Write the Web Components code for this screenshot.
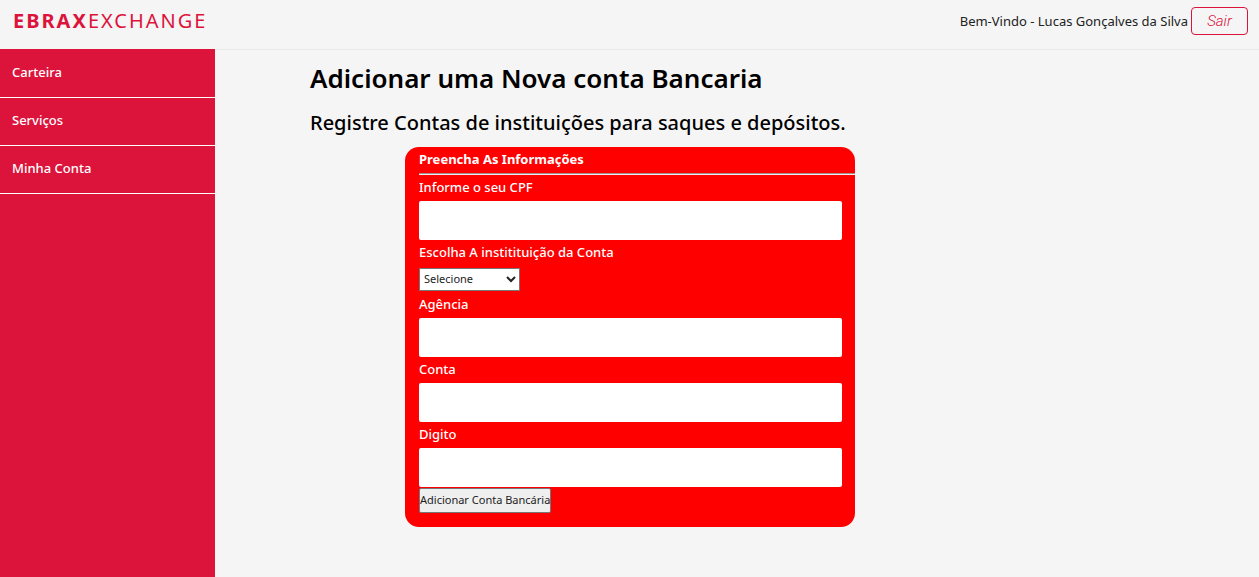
<!DOCTYPE html>
<html lang="pt-BR">
<head>
<meta charset="utf-8">
<title>Ebrax Exchange</title>
<style>
body { margin: 0; background: #f5f5f5; font-family: "Noto Sans", "Open Sans", sans-serif; }
</style>
</head>
<body>
<exchange-app></exchange-app>
<script>
function define(name, html, setup) {
  const template = document.createElement('template');
  template.innerHTML = html;
  customElements.define(name, class extends HTMLElement {
    constructor() {
      super();
      this.attachShadow({ mode: 'open' }).append(template.content.cloneNode(true));
    }
    connectedCallback() { if (setup) setup(this, this.shadowRoot); }
  });
}

define('top-bar', `
<style>
:host { display: flex; justify-content: space-between; align-items: flex-start; box-sizing: border-box; height: 50px; padding: 7px 11px 0 13px; border-bottom: 1px solid #e9e9e9; }
.logo { font-size: 20px; line-height: 28px; letter-spacing: 2px; color: #dc143c; font-weight: 400; text-decoration: none; }
b { font-weight: 700; }
.user { display: flex; align-items: center; gap: 3px; font-size: 13px; font-weight: 400; color: #222; }
button { box-sizing: border-box; width: 57px; height: 28px; padding: 0; border: 1px solid #dc143c; border-radius: 4px; background: transparent; color: #dc143c; font: italic 300 15px Roboto, sans-serif; }
</style>
<a class="logo" href="#"><b>EBRAX</b>EXCHANGE</a>
<div class="user"><span>Bem-Vindo - Lucas Gonçalves da Silva</span><button type="button">Sair</button></div>`);

define('nav-item', `
<style>
:host { display: block; border-bottom: 1px solid #fff; }
a { display: block; padding: 0 12px 2px; color: #fff; font-size: 13px; font-weight: 500; line-height: 45px; text-decoration: none; }
</style>
<a href="#"><slot></slot></a>`);

define('side-menu', `
<style>
:host { display: block; margin-top: -1px; padding-top: 1px; background: #dc143c; }
</style>
<nav><slot></slot></nav>`);

define('text-field', `
<style>
:host { display: block; }
label { display: block; padding-bottom: 2px; font-size: 13px; font-weight: 500; line-height: 24px; }
input { display: block; box-sizing: border-box; width: 100%; height: 39px; padding: 0 8px; border: 0; border-radius: 2px; background: #fff; font: inherit; }
</style>
<label for="field"></label><input id="field" type="text">`,
(host, root) => { root.querySelector('label').textContent = host.getAttribute('label'); });

define('select-field', `
<style>
:host { display: block; }
label { display: block; padding-bottom: 2px; font-size: 13px; font-weight: 500; line-height: 24px; }
select { display: block; box-sizing: border-box; width: 101px; height: 23px; margin: 2px 0 1px; padding: 0 0 2px; border: 1px solid #767676; border-radius: 0; background: #fff; color: #222; font-family: inherit; font-size: 11px; font-weight: 400; }
</style>
<label for="field"></label><select id="field"><option>Selecione</option></select>`,
(host, root) => { root.querySelector('label').textContent = host.getAttribute('label'); });

define('bank-form', `
<style>
:host { display: block; box-sizing: border-box; max-width: 450px; margin: 0 auto; padding: 0 13px 14px 14px; border-radius: 14px; background: #f00; color: #fff; }
h3 { margin: 0 -13px 0 0; padding-bottom: 2px; font-size: 13px; font-weight: 700; line-height: 24px; }
hr { height: 1px; margin: 0 -13px 0 0; border: 0; border-top: 1px solid #a09090; background: #eee; }
button { display: block; box-sizing: border-box; width: 132px; height: 25px; margin-top: 1px; padding: 0 0 2px; border: 1px solid #767676; border-radius: 2px; background: #efefef; color: #222; font-family: inherit; font-size: 11px; font-weight: 400; white-space: nowrap; }
</style>
<form>
<h3>Preencha As Informações</h3>
<hr>
<text-field label="Informe o seu CPF"></text-field>
<select-field label="Escolha A institituição da Conta"></select-field>
<text-field label="Agência"></text-field>
<text-field label="Conta"></text-field>
<text-field label="Digito"></text-field>
<button type="button">Adicionar Conta Bancária</button>
</form>`);

define('exchange-app', `
<style>
:host { display: flex; flex-direction: column; min-height: 100vh; }
.body { display: grid; grid-template-columns: 215px 1fr; flex: 1; }
main { box-sizing: border-box; max-width: 735px; padding: 8px 0 0 95px; }
h1, h2 { margin: 0; color: #000; }
h1 { font-size: 26px; font-weight: 600; line-height: 40px; }
h2 { margin: 8px 0 7px; font-size: 20px; font-weight: 500; line-height: 34px; }
</style>
<top-bar></top-bar>
<div class="body">
<side-menu><nav-item>Carteira</nav-item><nav-item>Serviços</nav-item><nav-item>Minha Conta</nav-item></side-menu>
<main>
<h1>Adicionar uma Nova conta Bancaria</h1>
<h2>Registre Contas de instituições para saques e depósitos.</h2>
<bank-form></bank-form>
</main>
</div>`);
</script>
</body>
</html>
